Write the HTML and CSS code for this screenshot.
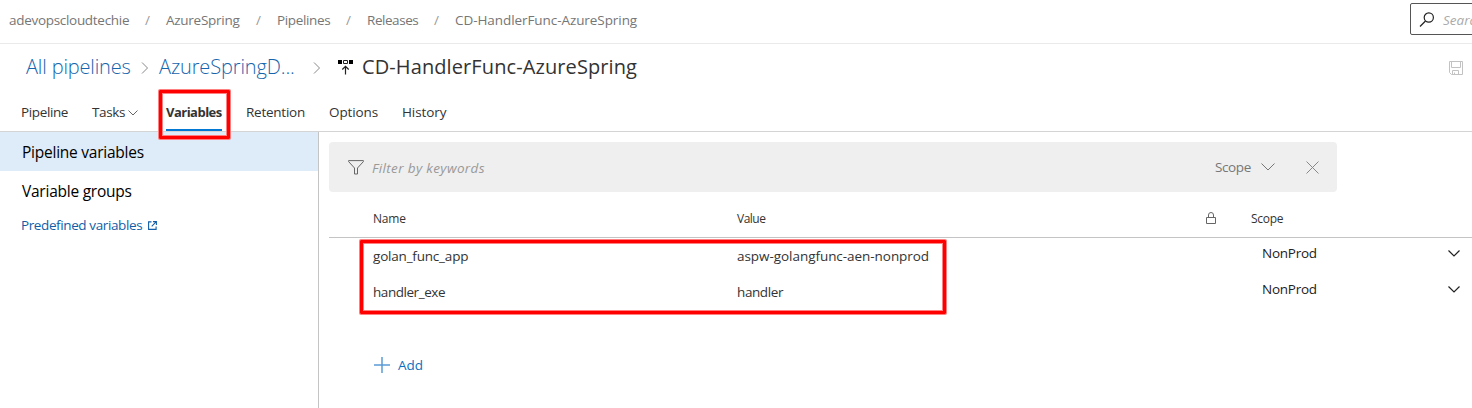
FILE: index.html
```html
<!DOCTYPE html>
<html lang="en">
<head>
<meta charset="utf-8">
<title>CD-HandlerFunc-AzureSpring</title>
<link rel="stylesheet" href="styles.css">
</head>
<body>
<header class="topbar">
  <nav class="crumbs">
    <span class="c-org">adevopscloudtechie</span><i>/</i>
    <span class="c-project">AzureSpring</span><i>/</i>
    <span class="c-pipes">Pipelines</span><i>/</i>
    <span class="c-rel">Releases</span><i>/</i>
    <span class="c-def">CD-HandlerFunc-AzureSpring</span>
  </nav>
  <div class="search">
    <svg width="16" height="16" viewBox="0 0 16 16"><circle cx="9.8" cy="5.5" r="4.6"/><path d="M6.5 9 1 14.5"/></svg>
    <span>Search</span>
  </div>
</header>
<div class="titlebar">
  <a class="t-all">All pipelines</a>
  <svg class="sep" width="8" height="12" viewBox="0 0 8 12"><path d="M1 .5 6.5 6 1 11.5"/></svg>
  <a class="t-project">AzureSpringD...</a>
  <svg class="sep" width="8" height="12" viewBox="0 0 8 12"><path d="M1 .5 6.5 6 1 11.5"/></svg>
  <svg class="release" width="15" height="15" viewBox="0 0 15 15"><path fill="#000" stroke="none" d="M0 0h4v4H0zM11 0h4v4h-4z"/><path stroke="#222" d="M5.500.5h4v3h-4z"/><path stroke="#222" stroke-width="1.200" d="M7.500 14.500V6.300M4.300 9.500l3.200-3.200 3.200 3.200"/></svg>
  <h1>CD-HandlerFunc-AzureSpring</h1>
  <svg class="save" width="14" height="14" viewBox="0 0 14 14"><path d="M.5.5h13v13H2.500l-2-2zM2.500.5v6h9v-6M3.500 13.500v-4h6v4M5.500 13.500v-2"/></svg>
</div>
<nav class="tabs">
  <span class="tab w-pipeline">Pipeline</span>
  <span class="tab w-tasks">Tasks <svg width="10" height="6" viewBox="0 0 10 6"><path d="M.5.5 5 5 9.500.5"/></svg></span>
  <span class="tab active">Variables<b class="mark mark-tab"></b></span>
  <span class="tab w-ret">Retention</span>
  <span class="tab w-opt">Options</span>
  <span class="tab w-hist">History</span>
</nav>
<div class="body">
  <aside class="side">
    <div class="item selected">Pipeline variables</div>
    <div class="item">Variable groups</div>
    <a class="predefined"><span>Predefined variables</span><svg width="9" height="9" viewBox="0 0 9 9"><path d="M3.500.9H.6v7.500h7.500V5.500M5 .6h3.400V4M8.300.700 3.700 5.300"/></svg></a>
  </aside>
  <main class="main">
    <div class="filter">
      <svg class="funnel" width="16" height="15" viewBox="0 0 16 15"><path d="M.6.600h14.800v1L9.500 8v6h-3V8L.6 1.600z"/></svg>
      <span class="placeholder">Filter by keywords</span>
      <span class="scope">Scope</span>
      <svg class="down" width="14" height="8" viewBox="0 0 14 8"><path d="M.5.5 7 7 13.500.5"/></svg>
      <svg class="close" width="13" height="13" viewBox="0 0 13 13"><path d="M.5.5l12 12M12.500.5l-12 12"/></svg>
    </div>
    <div class="row head">
      <span class="h-name">Name</span><span class="h-value">Value</span>
      <svg width="10" height="12" viewBox="0 0 10 12"><path d="M.5 5.500h9v6h-9zM2.500 5.500V3a2.500 2.500 0 0 1 5 0v2.500"/></svg>
      <span class="h-scope">Scope</span>
    </div>
    <div class="rows">
      <div class="row">
        <span class="v-name1">golan_func_app</span><span class="v-val1">aspw-golangfunc-aen-nonprod</span><i></i>
        <span class="env">NonProd</span>
        <svg class="open" width="12" height="7" viewBox="0 0 12 7"><path d="M.5.5 6 6 11.500.5"/></svg>
      </div>
      <div class="row">
        <span class="v-name2">handler_exe</span><span class="v-val2">handler</span><i></i>
        <span class="env">NonProd</span>
        <svg class="open" width="12" height="7" viewBox="0 0 12 7"><path d="M.5.5 6 6 11.500.5"/></svg>
      </div>
      <b class="mark mark-rows"></b>
    </div>
    <a class="add"><svg width="16" height="16" viewBox="0 0 16 16"><path d="M0 8h16M8 0v16"/></svg><span>Add</span></a>
  </main>
</div>
</body>
</html>
```
FILE: styles.css
```css
* { box-sizing: border-box; }
body { margin: 0; height: 408px; overflow: hidden; background: #fff; color: #333; font: 13.5px/20px "Open Sans", "Noto Sans", sans-serif; display: flex; flex-direction: column; white-space: nowrap; }
svg { display: block; flex: none; fill: none; stroke: #666; stroke-width: 1; }
i { font-style: normal; }

.topbar { height: 44px; flex: none; border-bottom: 1px solid #eaeaea; display: flex; justify-content: space-between; overflow: hidden; }
.crumbs { display: grid; grid-template-columns: 136px 21px 90px 21px 69px 21px 67px 21px 200px; padding-left: 9px; height: 40px; line-height: 40px; color: #767676; }
.crumbs i { color: #999; }
.c-org { letter-spacing: -.3px; }
.c-project { letter-spacing: -.27px; }
.c-pipes { letter-spacing: -.35px; }
.c-rel { letter-spacing: -.45px; }
.c-def { letter-spacing: -.07px; }
.search { width: 240px; height: 32px; margin: 3px -178px 0 0; border: 1px solid #555; border-radius: 2px; display: flex; align-items: center; padding-left: 8px; gap: 8px; flex: none; }
.search svg { stroke: #222; stroke-width: 1.2; margin-top: 1px; }
.search span { font-style: italic; color: #aaa; margin-top: 2px; }

.titlebar { height: 48px; flex: none; display: grid; grid-template-columns: 115px 18px 154px 25px 24px 1fr 23px; padding-left: 26px; align-items: center; font-size: 20px; line-height: 46px; }
.titlebar a { color: #1565ad; height: 48px; font-weight: 300; }
.t-all { letter-spacing: -.15px; }
.t-project { letter-spacing: -.12px; }
.titlebar h1 { margin: 0; font-size: 20px; font-weight: 400; height: 48px; color: #333; letter-spacing: .1px; }
.sep { stroke: #888; }
.release { margin-top: -2px; }
.save { stroke: #c2c2c2; }

.tabs { height: 40px; flex: none; display: grid; grid-template-columns: 71px 74px 80px 83px 73px 60px; padding-left: 21px; border-bottom: 1px solid #d4d4d4; line-height: 40px; }
.tab { position: relative; height: 39px; }
.tab svg { display: inline-block; margin-left: 0; vertical-align: 1px; }
.w-pipeline { letter-spacing: -.37px; }
.w-tasks { letter-spacing: -.35px; }
.w-ret { letter-spacing: -.25px; }
.w-opt, .w-hist { letter-spacing: -.1px; }
.active { width: 56px; font-size: 13px; font-weight: 700; letter-spacing: -.52px; border-bottom: 2px solid #0078d4; }
.mark { position: absolute; border: 3px solid #f00; box-shadow: 0 0 0 1px #ff8080, inset 0 0 0 1px #ff8080; border-radius: 1px; }
.mark-tab { left: -7px; top: -2px; width: 71px; height: 49px; z-index: 2; }

.body { flex: 1; display: flex; }
.side { width: 319px; flex: none; border-right: 1px solid #c4c4c4; color: #000; }
.item { height: 39px; line-height: 41px; padding-left: 22px; font-size: 15.5px; letter-spacing: -.24px; }
.selected { background: #deebf8; }
.predefined { display: flex; align-items: center; gap: 6px; margin-top: 5px; padding-left: 21px; height: 20px; color: #105ea8; letter-spacing: -.39px; }
.predefined svg { stroke: #105ea8; stroke-width: 1.1; }
.main { flex: 1; padding: 10px 0 0 10px; }
.filter { width: 1008px; height: 50px; background: #efefef; border-radius: 4px; padding-left: 19px; display: grid; grid-template-columns: 24px 843px 46px 45px 30px; align-items: center; }
.placeholder { font-style: italic; color: #999; padding-top: 2px; letter-spacing: .35px; }
.scope { color: #777; letter-spacing: -.4px; }
.funnel { stroke: #666; }
.down { stroke: #777; }
.close { stroke: #888; }
.row { display: grid; grid-template-columns: 364px 469px 45px 197px 20px; padding-left: 44px; height: 36px; line-height: 36px; align-items: center; }
.head { height: 46px; line-height: 54px; border-bottom: 1px solid #c4c4c4; font-size: 12px; }
.h-name { letter-spacing: -.2px; }
.h-value { letter-spacing: -.5px; }
.h-scope { letter-spacing: -.3px; }
.v-name1 { letter-spacing: -.2px; }
.v-val1 { letter-spacing: -.05px; }
.v-name2 { letter-spacing: -.45px; }
.v-val2 { letter-spacing: -.4px; }
.head svg { margin-top: -3px; }
.rows { position: relative; height: 109px; }
.env { padding-left: 11px; margin-top: -6px; color: #222; letter-spacing: -.25px; }
.open { stroke: #222; stroke-width: 1.2; margin-top: -6px; }
.mark-rows { left: 31px; top: 2px; width: 586px; height: 74px; }
.add { display: flex; align-items: center; gap: 8px; padding-left: 45px; height: 36px; color: #106ebe; }
.add svg { stroke: #5b9bd5; stroke-width: 1.5; }
```
